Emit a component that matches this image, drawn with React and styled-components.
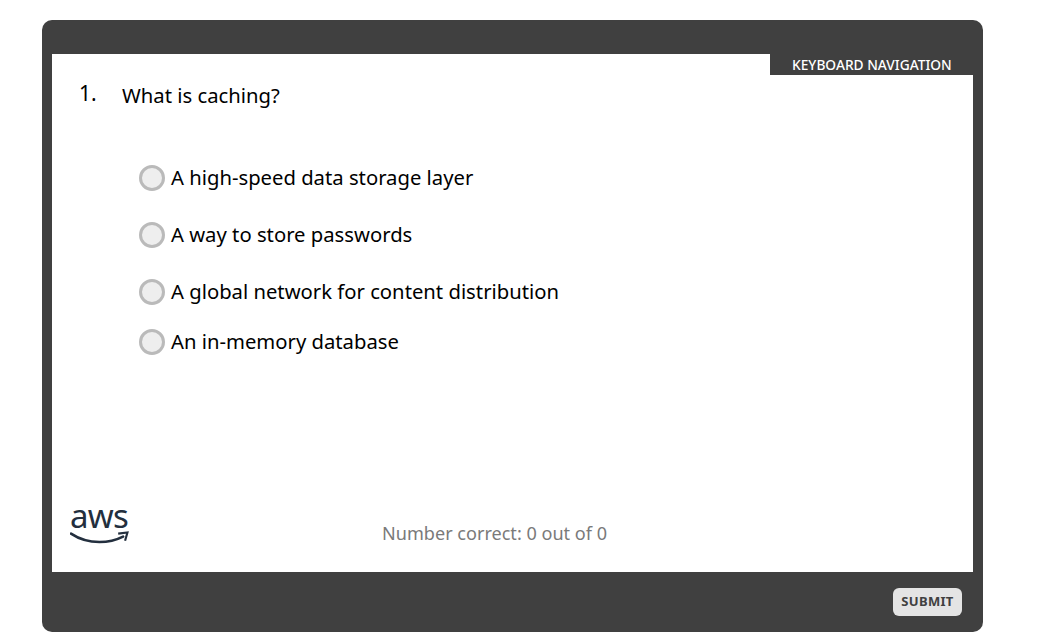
import React from 'react'
import styled, { createGlobalStyle } from 'styled-components'

const Global = createGlobalStyle`
  html, body {
    margin: 0;
    padding: 0;
    background: #fff;
    font-family: 'Noto Sans', 'Open Sans', sans-serif;
  }
`

const answers = [
  { text: 'A high-speed data storage layer', gap: 57 },
  { text: 'A way to store passwords', gap: 57 },
  { text: 'A global network for content distribution', gap: 50 },
  { text: 'An in-memory database', gap: 0 },
]

const App = () => {
  return (
    <Page>
      <Global />
      <Frame>
        <Panel>
          <TabRow>
            <KeyboardTab>KEYBOARD NAVIGATION</KeyboardTab>
          </TabRow>
          <Question>
            <Number>1.</Number>
            <Prompt>What is caching?</Prompt>
          </Question>
          <AnswerList>
            {answers.map((a) => (
              <Answer key={a.text} $gap={a.gap}>
                <Radio />
                <AnswerText>{a.text}</AnswerText>
              </Answer>
            ))}
          </AnswerList>
          <Footer>
            <Logo>
              <LogoText>aws</LogoText>
              <svg width="59" height="14" viewBox="0 0 60 14">
                <path d="M1 2.5C10 8.5 20 11 30 11C39 11 47 9 54 5.5" fill="none" stroke="#232f3e" strokeWidth="2.6" strokeLinecap="round" />
                <path d="M49 2.6L58.4 1.4L56 9.8" fill="none" stroke="#232f3e" strokeWidth="2.2" />
              </svg>
            </Logo>
            <Score>Number correct: 0 out of 0</Score>
          </Footer>
        </Panel>
        <BottomBar>
          <Submit>SUBMIT</Submit>
        </BottomBar>
      </Frame>
    </Page>
  )
}

export default App

const Page = styled.div`
  width: 1064px;
  height: 638px;
  padding: 20px 0 0 42px;
  box-sizing: border-box;
  overflow: hidden;
`

const Frame = styled.div`
  width: 941px;
  height: 612px;
  padding: 34px 10px 0;
  box-sizing: border-box;
  background: #404040;
  border-radius: 10px;
  display: flex;
  flex-direction: column;
`

const Panel = styled.div`
  height: 518px;
  background: #fff;
  display: flex;
  flex-direction: column;
`

const TabRow = styled.div`
  display: flex;
  justify-content: flex-end;
`

const KeyboardTab = styled.div`
  width: 203px;
  height: 21px;
  padding-left: 22px;
  box-sizing: border-box;
  background: #404040;
  color: #fff;
  font-size: 13.75px;
  font-weight: 500;
  line-height: 22px;
  white-space: nowrap;
`

const Question = styled.div`
  display: flex;
  align-items: flex-start;
  padding: 6px 0 0 27px;
  color: #000;
`

const Number = styled.div`
  width: 43px;
  font-size: 21px;
  line-height: 24px;
`

const Prompt = styled.div`
  font-size: 20.25px;
  line-height: 28px;
  margin-bottom: 2px;
`

const AnswerList = styled.div`
  display: flex;
  flex-direction: column;
  padding: 53px 0 0 87px;
`

const Answer = styled.div`
  display: flex;
  align-items: center;
  height: 28px;
  margin-bottom: ${(p) => (p.$gap ? p.$gap - 28 : 0)}px;
`

const Radio = styled.span`
  width: 26px;
  height: 26px;
  box-sizing: border-box;
  border: 3px solid #bababa;
  border-radius: 50%;
  background: #eeeeee;
  margin-right: 6px;
  flex: none;
`

const AnswerText = styled.span`
  font-size: 20.25px;
  line-height: 26px;
  padding-bottom: 2px;
  color: #000;
`

const Footer = styled.div`
  margin-top: auto;
  height: 68px;
  display: flex;
  align-items: flex-start;
  padding-left: 17px;
`

const Logo = styled.div`
  width: 60px;
  margin-top: -3px;
  display: flex;
  flex-direction: column;
  align-items: center;
`

const LogoText = styled.span`
  font-size: 33px;
  line-height: 30px;
  height: 30px;
  color: #232f3e;
  letter-spacing: -0.8px;
`

const Score = styled.div`
  margin: 16px 0 0 253px;
  font-size: 18.08px;
  line-height: 26px;
  color: #7a7a7a;
`

const BottomBar = styled.div`
  flex: 1;
  display: flex;
  justify-content: flex-end;
  align-items: flex-start;
  padding: 16px 11px 0 0;
`

const Submit = styled.button`
  width: 69px;
  height: 28px;
  padding: 0 0 2px;
  border: none;
  border-radius: 6px;
  background: #e4e4e4;
  color: #404040;
  font-family: inherit;
  font-size: 13px;
  font-weight: 700;
  letter-spacing: 0.3px;
`
